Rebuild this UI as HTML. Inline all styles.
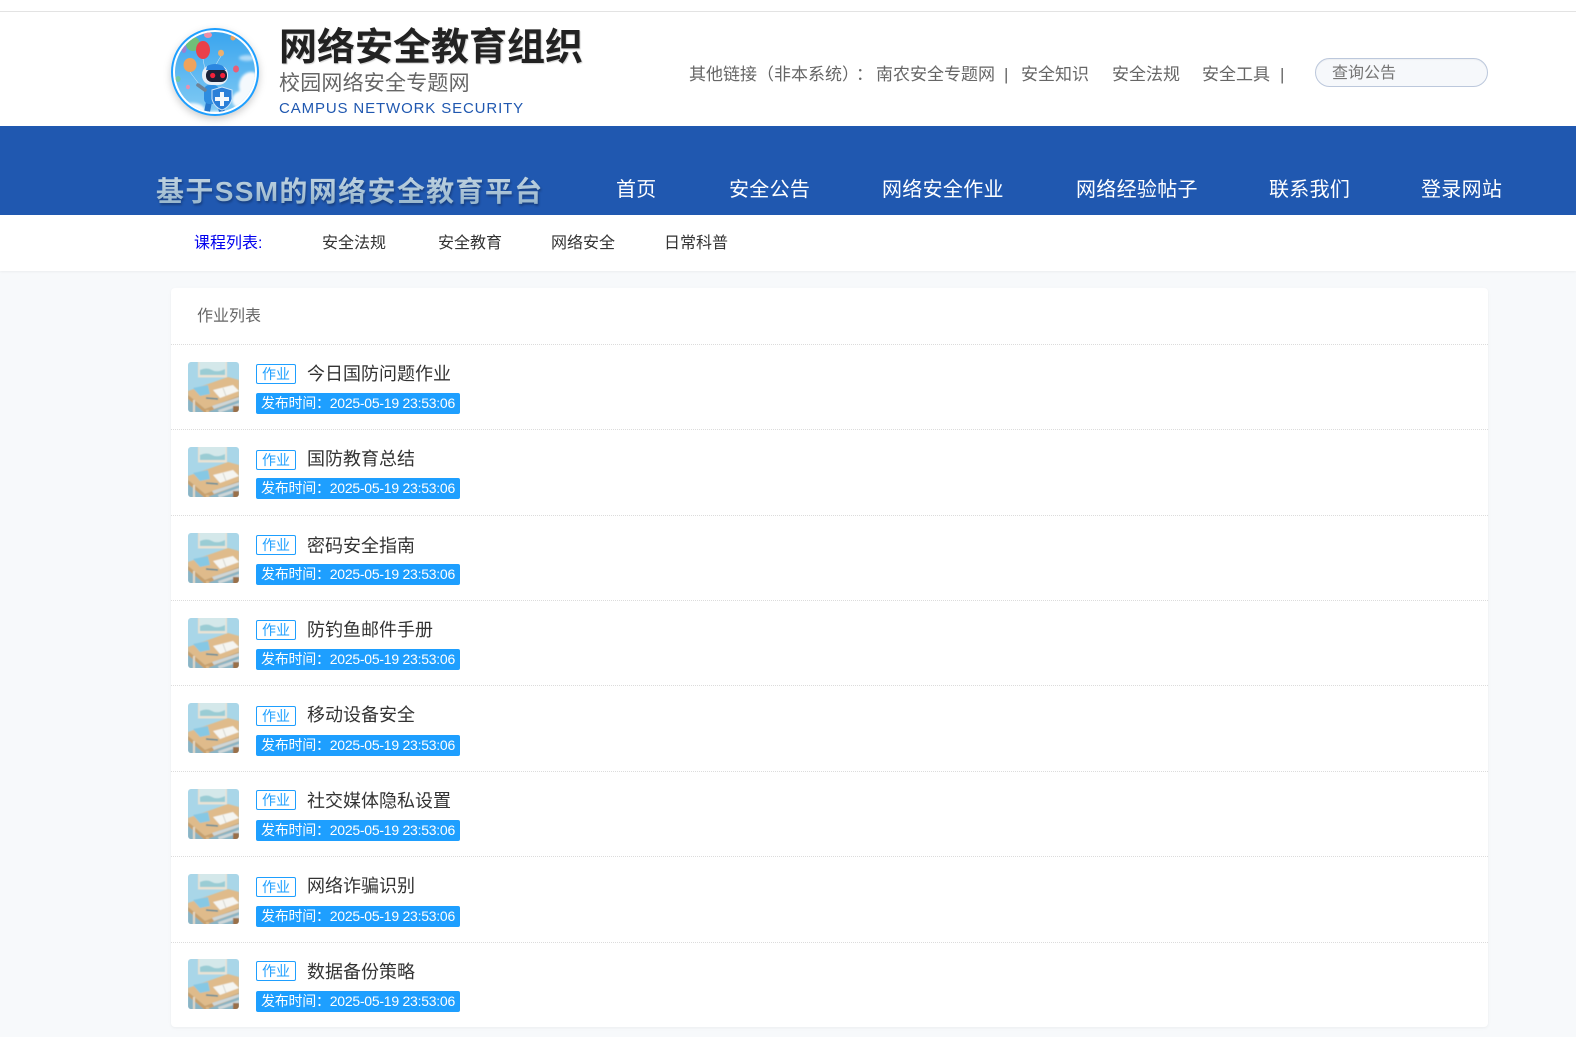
<!DOCTYPE html>
<html lang="zh-CN">
<head>
<meta charset="utf-8">
<title>基于SSM的网络安全教育平台</title>
<style>
*{box-sizing:border-box;margin:0;padding:0}
html,body{width:1576px;height:1037px;overflow:hidden;background:#f7f9fb}
body{position:relative;font-family:"Liberation Sans","WenQuanYi Zen Hei","Noto Sans CJK SC",sans-serif;color:#333}
.a{position:absolute;white-space:nowrap}
#top{left:0;top:0;width:1576px;height:126px;background:#fff;border-top:0}
#line{left:0;top:11px;width:1576px;height:1px;background:#e3e3e3}
#blue{left:0;top:126px;width:1576px;height:89px;background:#2058b0}
#sub{left:0;top:215px;width:1576px;height:56px;background:#fff;box-shadow:0 1px 2px rgba(0,0,0,.05)}
#t1{left:279px;top:26px;font-size:38px;line-height:44px;font-weight:700;color:#222;text-shadow:1px 1px 1px rgba(0,0,0,.18)}
#t2{left:279px;top:71px;font-size:21px;line-height:26px;color:#666;letter-spacing:.2px}
#t3{left:279px;top:99px;font-size:15px;line-height:20px;color:#2058b0;letter-spacing:.87px}
.l{top:63px;font-size:17px;line-height:24px;color:#666}
#search{left:1315px;top:58px;width:173px;height:29px;background:#f6f8fb;border:1px solid #bcc8dc;border-radius:15px;box-shadow:inset 0 1px 1px rgba(0,0,0,.04);padding-left:16px;font-size:16px;line-height:30px;color:#757575}
#brand{left:156px;top:174px;font-size:28px;line-height:36px;font-weight:700;letter-spacing:1.35px;color:#a9c4d8;background:linear-gradient(#c4d6e3,#8fb0c8);-webkit-background-clip:text;background-clip:text;-webkit-text-fill-color:transparent;filter:drop-shadow(1px 2px 1px rgba(10,30,70,.45))}
.n{top:176px;font-size:20px;line-height:28px;color:#fff;letter-spacing:.3px}
.s{top:233px;font-size:16px;line-height:22px;color:#333}
#card{left:171px;top:288px;width:1317px;height:739px;background:#fff;border-radius:4px;box-shadow:0 1px 3px rgba(0,0,0,.05)}
#h{left:197px;top:305px;font-size:16px;line-height:24px;color:#666}
.d{left:171px;width:1317px;height:0;border-top:1px dotted #dcdcdc}
.th{left:188px;width:51px;height:50px;border-radius:3px;overflow:hidden}
.tag{left:256px;width:40px;height:20px;border:1px solid #1e9fff;border-radius:2px;background:#fff;color:#1e9fff;font-size:14px;line-height:18px;text-align:center}
.ti{left:307px;font-size:18px;line-height:26px;color:#333}
.dt{left:256px;width:204px;height:21px;background:#1e9fff;border-radius:2px;color:#fff;font-size:14px;line-height:21px;padding-left:5px;letter-spacing:-.25px}
svg{display:block}
</style>
</head>
<body>
<svg width="0" height="0" style="position:absolute">
<defs>
<filter id="bt" x="-5%" y="-5%" width="110%" height="110%"><feGaussianBlur stdDeviation=".45"/></filter>
<symbol id="desk" viewBox="0 0 51 51">
<rect width="51" height="51" fill="#a9d6e8"/>
<g filter="url(#bt)">
<rect x="10" y="-1" width="29" height="16.5" fill="#e9e2d4"/>
<rect x="11.5" y="-1" width="26" height="14" fill="#d4e8ea"/>
<path d="M12 8q7-3 12 0t13-1v6H12z" fill="#9accd4"/>
<rect x="0" y="34" width="51" height="17" fill="#8ab4c4"/>
<path d="M0 29L40 15l11 3v16L17 47 0 33z" fill="#dfbb8b"/>
<path d="M0 33l17 14 34-13v4L17 51 0 37z" fill="#c9a06c"/>
<path d="M24 44l27-9v3L26 47zM30 48l21-7v3l-20 7z" fill="#cdd6d8"/>
<rect x="5" y="38" width="2" height="13" fill="#e4d9c8"/>
<rect x="18" y="48" width="3" height="3" fill="#d9b98c"/>
<rect x="45" y="44" width="6" height="7" fill="#9a7048"/>
<path d="M5 26l15-3 2 9-10 2z" fill="#86c8e4"/>
<path d="M25 28l20-5 6 6-19 7z" fill="#f5f5f1"/>
<path d="M35 26l3 8" stroke="#c9c9c2" stroke-width=".8"/>
<path d="M18 36l12 1" stroke="#5d8a9a" stroke-width="1.5"/>
</g>
</symbol>
<clipPath id="lc"><circle cx="44" cy="44" r="40"/></clipPath>
<linearGradient id="sky" x1="0" y1="0" x2="0" y2="1"><stop offset="0" stop-color="#36a3ee"/><stop offset="1" stop-color="#86cdf4"/></linearGradient>
<filter id="bl"><feGaussianBlur stdDeviation=".35"/></filter>
<filter id="bl2"><feGaussianBlur stdDeviation="1.2"/></filter>
</defs>
</svg>

<div class="a" id="top"></div>
<div class="a" id="line"></div>

<svg class="a" style="left:171px;top:28px;filter:drop-shadow(0 3px 4px rgba(0,0,0,.2))" width="88" height="88" viewBox="0 0 88 88">
<circle cx="44" cy="44" r="44" fill="#1e9fff"/>
<circle cx="44" cy="44" r="42" fill="#fff"/>
<g clip-path="url(#lc)">
<rect width="88" height="88" fill="url(#sky)"/>
<g filter="url(#bl2)" fill="#f4f9fd">
<ellipse cx="80" cy="58" rx="12" ry="14"/><ellipse cx="75" cy="72" rx="14" ry="10"/><ellipse cx="20" cy="82" rx="14" ry="7"/><ellipse cx="50" cy="88" rx="26" ry="5"/><ellipse cx="76" cy="30" rx="8" ry="3" opacity=".6"/>
</g>
<g filter="url(#bl)">
<ellipse cx="22" cy="16" rx="7" ry="7" fill="#6fbf78"/>
<ellipse cx="37" cy="7" rx="4" ry="3" fill="#ef8fa8"/>
<ellipse cx="13" cy="21" rx="2.5" ry="4" fill="#9d7fd0"/>
<ellipse cx="19" cy="37" rx="6.5" ry="7" fill="#eea35c"/>
<ellipse cx="32" cy="22" rx="7" ry="9" fill="#ea3f4a"/>
<ellipse cx="50" cy="25" rx="3" ry="3.3" fill="#edb06d"/>
<ellipse cx="65" cy="41" rx="3" ry="3.5" fill="#e85f78"/>
<ellipse cx="7" cy="51" rx="2.5" ry="3" fill="#72c7a8"/>
<ellipse cx="17" cy="59" rx="2" ry="2.3" fill="#e890b0"/>
<ellipse cx="62" cy="10" rx="2.5" ry="2.5" fill="#eea35c"/>
<path d="M32 31L36 52M19 44L31 60M50 28L44 38" stroke="#dfeaf4" stroke-width=".5" fill="none"/>
<path d="M35 74l-2 10h6l2-10zM46 76l2 8h6l-2-9z" fill="#2778cc"/>
<rect x="33" y="57" width="15" height="19" rx="5" fill="#2f8de0"/>
<path d="M34 62L27 57" stroke="#6d8296" stroke-width="3.6" stroke-linecap="round"/>
<rect x="31" y="37" width="26" height="20" rx="9.5" fill="#e8eef5"/>
<rect x="35" y="41" width="21" height="13" rx="6" fill="#1a2338"/>
<path d="M36 38q8-4 16 0l3 4H35z" fill="#2a86e0"/>
<circle cx="41.7" cy="47.5" r="2.6" fill="#f3243a"/>
<circle cx="51.7" cy="47.5" r="2.6" fill="#f3243a"/>
<path d="M41 62l10-3 10 3v9q-2 8-10 11-8-3-10-11z" fill="#2b7fd8" stroke="#c9e2f7" stroke-width="1"/>
<path d="M49 64h4v5h5v4h-5v5h-4v-5h-5v-4h5z" fill="#f4f8fc"/>
</g>
</g>
</svg>

<div class="a" id="t1">网络安全教育组织</div>
<div class="a" id="t2">校园网络安全专题网</div>
<div class="a" id="t3">CAMPUS NETWORK SECURITY</div>

<div class="a l" style="left:689px">其他链接（非本系统）</div>
<div class="a l" style="left:856px">：</div>
<div class="a l" style="left:876px">南农安全专题网</div>
<div class="a l" style="left:1004px">|</div>
<div class="a l" style="left:1021px">安全知识</div>
<div class="a l" style="left:1112px">安全法规</div>
<div class="a l" style="left:1202px">安全工具</div>
<div class="a l" style="left:1280px">|</div>
<div class="a" id="search">查询公告</div>

<div class="a" id="blue"></div>
<div class="a" id="brand">基于SSM的网络安全教育平台</div>
<div class="a n" style="left:616px">首页</div>
<div class="a n" style="left:729px">安全公告</div>
<div class="a n" style="left:882px">网络安全作业</div>
<div class="a n" style="left:1076px">网络经验帖子</div>
<div class="a n" style="left:1269px">联系我们</div>
<div class="a n" style="left:1421px">登录网站</div>

<div class="a" id="sub"></div>
<div class="a s" style="left:194px;color:#0000ee">课程列表:</div>
<div class="a s" style="left:322px">安全法规</div>
<div class="a s" style="left:438px">安全教育</div>
<div class="a s" style="left:551px">网络安全</div>
<div class="a s" style="left:664px">日常科普</div>

<div class="a" id="card"></div>
<div class="a" id="h">作业列表</div>

<div class="a d" style="top:344px"></div>
<svg class="a th" style="top:362px"><use href="#desk" width="51" height="51"/></svg>
<div class="a tag" style="top:364px">作业</div>
<div class="a ti" style="top:361px">今日国防问题作业</div>
<div class="a dt" style="top:393px">发布时间：2025-05-19 23:53:06</div>

<div class="a d" style="top:429px"></div>
<svg class="a th" style="top:447px"><use href="#desk" width="51" height="51"/></svg>
<div class="a tag" style="top:450px">作业</div>
<div class="a ti" style="top:446px">国防教育总结</div>
<div class="a dt" style="top:478px">发布时间：2025-05-19 23:53:06</div>

<div class="a d" style="top:515px"></div>
<svg class="a th" style="top:533px"><use href="#desk" width="51" height="51"/></svg>
<div class="a tag" style="top:535px">作业</div>
<div class="a ti" style="top:533px">密码安全指南</div>
<div class="a dt" style="top:564px">发布时间：2025-05-19 23:53:06</div>

<div class="a d" style="top:600px"></div>
<svg class="a th" style="top:618px"><use href="#desk" width="51" height="51"/></svg>
<div class="a tag" style="top:620px">作业</div>
<div class="a ti" style="top:617px">防钓鱼邮件手册</div>
<div class="a dt" style="top:649px">发布时间：2025-05-19 23:53:06</div>

<div class="a d" style="top:685px"></div>
<svg class="a th" style="top:703px"><use href="#desk" width="51" height="51"/></svg>
<div class="a tag" style="top:706px">作业</div>
<div class="a ti" style="top:702px">移动设备安全</div>
<div class="a dt" style="top:735px">发布时间：2025-05-19 23:53:06</div>

<div class="a d" style="top:771px"></div>
<svg class="a th" style="top:789px"><use href="#desk" width="51" height="51"/></svg>
<div class="a tag" style="top:790px">作业</div>
<div class="a ti" style="top:788px">社交媒体隐私设置</div>
<div class="a dt" style="top:820px">发布时间：2025-05-19 23:53:06</div>

<div class="a d" style="top:856px"></div>
<svg class="a th" style="top:874px"><use href="#desk" width="51" height="51"/></svg>
<div class="a tag" style="top:877px">作业</div>
<div class="a ti" style="top:873px">网络诈骗识别</div>
<div class="a dt" style="top:906px">发布时间：2025-05-19 23:53:06</div>

<div class="a d" style="top:942px"></div>
<svg class="a th" style="top:959px"><use href="#desk" width="51" height="51"/></svg>
<div class="a tag" style="top:961px">作业</div>
<div class="a ti" style="top:959px">数据备份策略</div>
<div class="a dt" style="top:991px">发布时间：2025-05-19 23:53:06</div>
</body>
</html>
